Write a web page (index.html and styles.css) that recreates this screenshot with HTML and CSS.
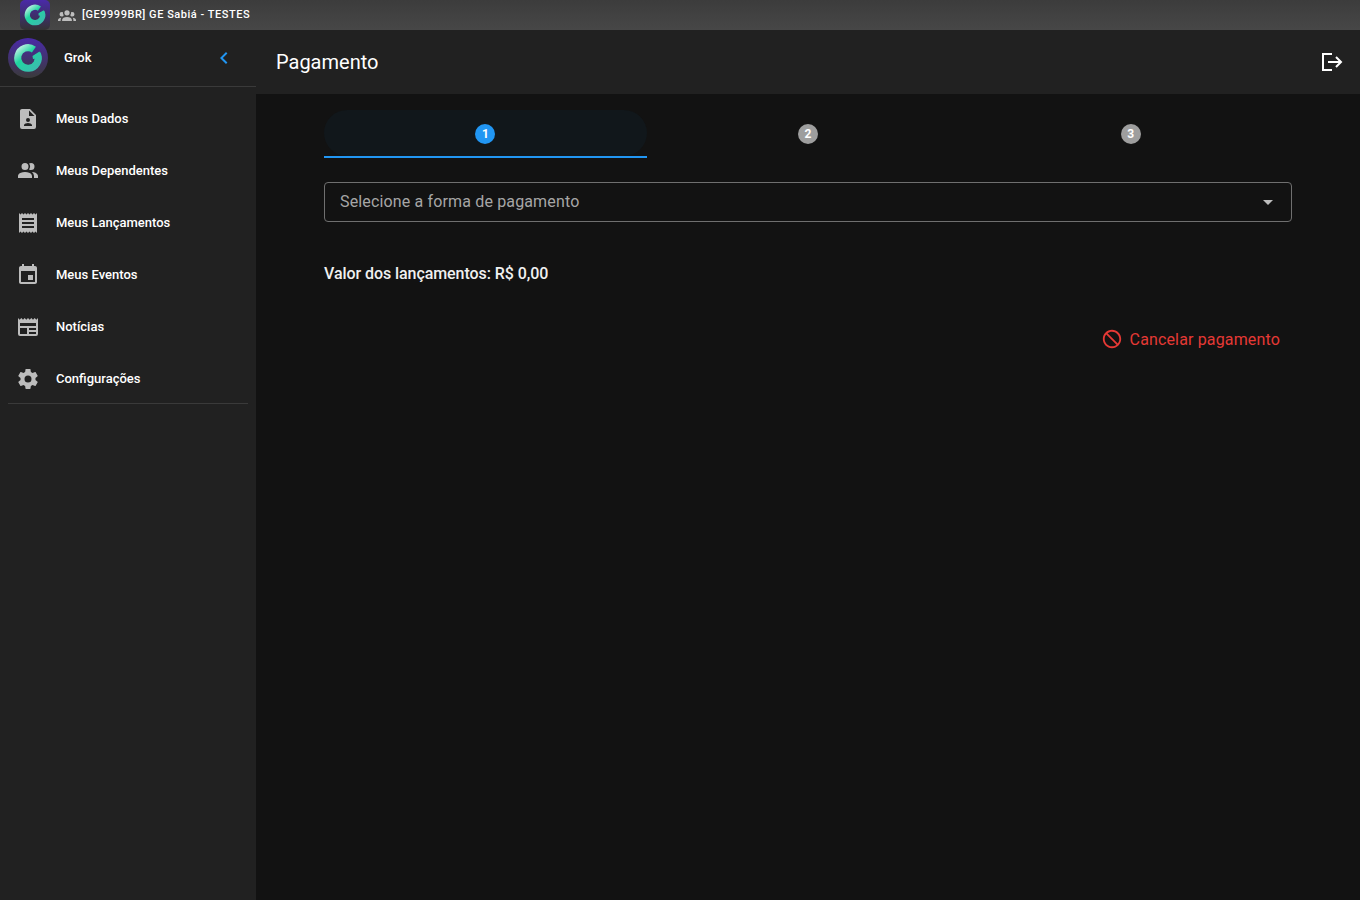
FILE: index.html
```html
<!DOCTYPE html>
<html lang="pt-BR">
<head>
  <meta charset="UTF-8">
  <title>Pagamento</title>
  <link rel="stylesheet" href="styles.css">
</head>
<body>
  <svg class="defs" width="0" height="0" aria-hidden="true">
    <defs>
      <linearGradient id="logo-g" gradientUnits="userSpaceOnUse" x1="10" y1="8" x2="30" y2="32">
        <stop offset="0" stop-color="#d2f2ea"/>
        <stop offset="0.4" stop-color="#1fd6a0"/>
        <stop offset="1" stop-color="#3fb8b0"/>
      </linearGradient>
      <symbol id="logo-mark" viewBox="0 0 40 40">
        <path d="M25.9 11.56A10.3 10.3 0 1 0 29.33 15.65" fill="none" stroke="url(#logo-g)" stroke-width="7"/>
        <path d="M24.5 18L31.5 13.5L33.8 19.5L25 21Z" fill="url(#logo-g)"/>
      </symbol>
    </defs>
  </svg>

  <header class="top-bar">
    <div class="top-logo">
      <svg width="30" height="30"><use href="#logo-mark"/></svg>
    </div>
    <svg class="top-icon" viewBox="0 0 24 24" width="18" height="18"><path d="M12,5.5A3.5,3.5 0 0,1 15.5,9A3.5,3.5 0 0,1 12,12.5A3.5,3.5 0 0,1 8.5,9A3.5,3.5 0 0,1 12,5.5M5,8C5.56,8 6.08,8.15 6.53,8.42C6.38,9.85 6.8,11.27 7.66,12.38C7.16,13.34 6.16,14 5,14A3,3 0 0,1 2,11A3,3 0 0,1 5,8M19,8A3,3 0 0,1 22,11A3,3 0 0,1 19,14C17.84,14 16.84,13.34 16.34,12.38C17.2,11.27 17.62,9.85 17.47,8.42C17.92,8.15 18.44,8 19,8M5.5,18.25C5.5,16.18 8.41,14.5 12,14.5C15.59,14.5 18.5,16.18 18.5,18.25V20H5.5V18.25M0,20V18.5C0,17.11 1.89,15.94 4.45,15.6C3.86,16.28 3.5,17.22 3.5,18.25V20H0M24,20H20.5V18.25C20.5,17.22 20.14,16.28 19.55,15.6C22.11,15.94 24,17.11 24,18.5V20Z"/></svg>
    <span class="top-title">[GE9999BR] GE Sabiá - TESTES</span>
  </header>

  <div class="app">
    <aside class="sidebar">
      <div class="user-row">
        <div class="avatar">
          <svg width="40" height="40"><use href="#logo-mark"/></svg>
        </div>
        <span class="user-name">Grok</span>
        <svg class="collapse" viewBox="0 0 24 24" width="24" height="24"><path d="M15.41,16.58L10.83,12L15.41,7.41L14,6L8,12L14,18L15.41,16.58Z"/></svg>
      </div>
      <nav class="menu">
        <a class="menu-item">
          <svg viewBox="0 0 24 24" width="24" height="24"><path d="M6,2C4.89,2 4,2.89 4,4V20A2,2 0 0,0 6,22H18A2,2 0 0,0 20,20V8L14,2H6M13,3.5L18.5,9H13V3.5M12,11A2,2 0 0,1 14,13A2,2 0 0,1 12,15A2,2 0 0,1 10,13A2,2 0 0,1 12,11M16,19H8V18C8,16.67 10.67,16 12,16C13.33,16 16,16.67 16,18V19Z"/></svg>
          <span>Meus Dados</span>
        </a>
        <a class="menu-item">
          <svg viewBox="0 0 24 24" width="24" height="24"><path d="M16 17V19H2V17S2 13 9 13 16 17 16 17M12.5 7.5A3.5 3.5 0 1 0 9 11A3.5 3.5 0 0 0 12.5 7.5M15.94 13A5.32 5.32 0 0 1 18 17V19H22V17S22 13.37 15.94 13M15 4A3.39 3.39 0 0 0 13.07 4.59A5 5 0 0 1 13.07 10.41A3.39 3.39 0 0 0 15 11A3.5 3.5 0 0 0 15 4Z"/></svg>
          <span>Meus Dependentes</span>
        </a>
        <a class="menu-item">
          <svg viewBox="0 0 24 24" width="24" height="24"><path d="M3,22L4.5,20.5L6,22L7.5,20.5L9,22L10.5,20.5L12,22L13.5,20.5L15,22L16.5,20.5L18,22L19.5,20.5L21,22V2L19.5,3.5L18,2L16.5,3.5L15,2L13.5,3.5L12,2L10.5,3.5L9,2L7.5,3.5L6,2L4.5,3.5L3,2M18,9H6V7H18M18,13H6V11H18M18,17H6V15H18V17Z"/></svg>
          <span>Meus Lançamentos</span>
        </a>
        <a class="menu-item">
          <svg viewBox="0 0 24 24" width="24" height="24"><path d="M17 12h-5v5h5v-5zM16 1v2H8V1H6v2H5c-1.11 0-1.99.9-1.99 2L3 19c0 1.1.89 2 2 2h14c1.1 0 2-.9 2-2V5c0-1.1-.9-2-2-2h-1V1h-2zm3 18H5V8h14v11z"/></svg>
          <span>Meus Eventos</span>
        </a>
        <a class="menu-item">
          <svg viewBox="0 0 24 24" width="24" height="24"><path d="M20,11H4V8H20M20,15H13V13H20M20,19H13V17H20M11,19H4V13H11M20.33,4.67L18.67,3L17,4.67L15.33,3L13.67,4.67L12,3L10.33,4.67L8.67,3L7,4.67L5.33,3L3.67,4.67L2,3V19A2,2 0 0,0 4,21H20A2,2 0 0,0 22,19V3L20.33,4.67Z"/></svg>
          <span>Notícias</span>
        </a>
        <a class="menu-item">
          <svg viewBox="0 0 24 24" width="24" height="24"><path d="M12,15.5A3.5,3.5 0 0,1 8.5,12A3.5,3.5 0 0,1 12,8.5A3.5,3.5 0 0,1 15.5,12A3.5,3.5 0 0,1 12,15.5M19.43,12.97C19.47,12.65 19.5,12.33 19.5,12C19.5,11.67 19.47,11.34 19.43,11L21.54,9.37C21.73,9.22 21.78,8.95 21.66,8.73L19.66,5.27C19.54,5.05 19.27,4.96 19.05,5.05L16.56,6.05C16.04,5.66 15.5,5.32 14.87,5.07L14.5,2.42C14.46,2.18 14.25,2 14,2H10C9.75,2 9.54,2.18 9.5,2.42L9.13,5.07C8.5,5.32 7.96,5.66 7.44,6.05L4.95,5.05C4.73,4.96 4.46,5.05 4.34,5.27L2.34,8.73C2.21,8.95 2.27,9.22 2.46,9.37L4.57,11C4.53,11.34 4.5,11.67 4.5,12C4.5,12.33 4.53,12.65 4.57,12.97L2.46,14.63C2.27,14.78 2.21,15.05 2.34,15.27L4.34,18.73C4.46,18.95 4.73,19.03 4.95,18.95L7.44,17.94C7.96,18.34 8.5,18.68 9.13,18.93L9.5,21.58C9.54,21.82 9.75,22 10,22H14C14.25,22 14.46,21.82 14.5,21.58L14.87,18.93C15.5,18.67 16.04,18.34 16.56,17.94L19.05,18.95C19.27,19.03 19.54,18.95 19.66,18.73L21.66,15.27C21.78,15.05 21.73,14.78 21.54,14.63L19.43,12.97Z"/></svg>
          <span>Configurações</span>
        </a>
      </nav>
      <div class="menu-divider"></div>
    </aside>

    <div class="content">
      <div class="toolbar">
        <h1>Pagamento</h1>
        <svg class="logout" viewBox="0 0 24 24" width="24" height="24"><path d="M12 4H3v16h9M8 12h13M16 7l5 5-5 5" fill="none" stroke="#fff" stroke-width="2"/></svg>
      </div>
      <main class="page">
        <div class="steps">
          <div class="step active"><div class="step-pill"><span class="step-num">1</span></div></div>
          <div class="step"><div class="step-pill"><span class="step-num">2</span></div></div>
          <div class="step"><div class="step-pill"><span class="step-num">3</span></div></div>
        </div>
        <div class="select">
          <span>Selecione a forma de pagamento</span>
          <i class="caret"></i>
        </div>
        <p class="total">Valor dos lançamentos: R$ 0,00</p>
        <div class="actions">
          <button class="cancel">
            <svg viewBox="0 0 24 24" width="22" height="22"><path d="M12 2C17.5 2 22 6.5 22 12S17.5 22 12 22 2 17.5 2 12 6.5 2 12 2M12 4C10.1 4 8.4 4.6 7.1 5.7L18.3 16.9C19.3 15.5 20 13.8 20 12C20 7.6 16.4 4 12 4M16.9 18.3L5.7 7.1C4.6 8.4 4 10.1 4 12C4 16.4 7.6 20 12 20C13.9 20 15.6 19.4 16.9 18.3Z"/></svg>
            Cancelar pagamento
          </button>
        </div>
      </main>
    </div>
  </div>
</body>
</html>
```

FILE: styles.css
```css
html, body {
  margin: 0;
  height: 100%;
  overflow: hidden;
}
body {
  font-family: Roboto, 'Liberation Sans', sans-serif;
  background-color: #121212;
  color: #fff;
}
.defs {
  display: block;
  height: 0;
}

/* barra superior */
.top-bar {
  display: flex;
  align-items: center;
  height: 30px;
  padding-left: 20px;
  background: linear-gradient(#3c3c3c, #474747);
}
.top-logo {
  width: 30px;
  height: 30px;
  border-radius: 5px;
  background: linear-gradient(#4a2aa8, #333);
}
.top-logo svg {
  display: block;
}
.top-icon {
  margin-left: 8px;
  fill: #bdbdbd;
}
.top-title {
  margin: 0 0 2px 6px;
  font-size: 11px;
  font-weight: 500;
  letter-spacing: 0.53px;
  color: #fff;
}

/* menu lateral */
.app {
  display: flex;
  height: 870px;
}
.sidebar {
  width: 256px;
  flex-shrink: 0;
  background-color: #212121;
}
.user-row {
  display: flex;
  align-items: center;
  height: 56px;
  margin-bottom: 1px;
  padding-left: 8px;
  padding-right: 20px;
  border-bottom: 1px solid #3a3a3a;
}
.avatar {
  width: 40px;
  height: 40px;
  border-radius: 50%;
  background: linear-gradient(#4a2aa8, #3a3a3a);
}
.avatar svg {
  display: block;
}
.user-name {
  flex: 1;
  margin: 0 0 2px 16px;
  font-size: 13px;
  font-weight: 500;
}
.collapse {
  fill: #2196f3;
}
.menu {
  padding-top: 4px;
}
.menu-item {
  display: flex;
  align-items: center;
  height: 52px;
  padding-left: 16px;
  font-size: 13px;
  font-weight: 500;
}
.menu-item svg {
  margin: 2px 16px 0 0;
  fill: #bdbdbd;
}
.menu-divider {
  height: 1px;
  margin: -1px 8px 0;
  background-color: #3a3a3a;
}

/* area principal */
.content {
  flex: 1;
  min-width: 0;
}
.toolbar {
  display: flex;
  align-items: center;
  justify-content: space-between;
  height: 64px;
  padding: 0 16px 0 20px;
  background-color: #212121;
}
.toolbar h1 {
  margin: 0;
  font-size: 20px;
  font-weight: 400;
}
.page {
  padding: 16px 68px 0;
}
.steps {
  display: grid;
  grid-template-columns: repeat(3, 1fr);
}
.step {
  box-sizing: border-box;
  height: 48px;
  border-bottom: 2px solid transparent;
}
.step.active {
  border-bottom-color: #2196f3;
}
.step-pill {
  display: flex;
  align-items: center;
  justify-content: center;
  height: 46px;
  border-radius: 24px;
}
.step.active .step-pill {
  background-color: #11171b;
}
.step-num {
  display: flex;
  align-items: center;
  justify-content: center;
  width: 20px;
  height: 20px;
  margin-top: 2px;
  border-radius: 50%;
  background-color: #9e9e9e;
  font-size: 12px;
  font-weight: 700;
}
.step.active .step-num {
  background-color: #2196f3;
}
.select {
  display: flex;
  align-items: center;
  justify-content: space-between;
  height: 40px;
  box-sizing: border-box;
  margin-top: 24px;
  padding: 0 18px 2px 15px;
  border: 1px solid #6f6f6f;
  border-radius: 4px;
  font-size: 16px;
  letter-spacing: 0.15px;
  color: #a6a6a6;
}
.caret {
  width: 0;
  height: 0;
  margin-top: 2px;
  border-left: 5px solid transparent;
  border-right: 5px solid transparent;
  border-top: 5px solid #bdbdbd;
}
.total {
  margin: 42px 0 0;
  font-size: 16px;
  font-weight: 500;
  letter-spacing: -0.07px;
  line-height: 20px;
  color: #f0f0f0;
}
.actions {
  display: flex;
  justify-content: flex-end;
  margin-top: 37px;
}
.cancel {
  display: flex;
  align-items: center;
  gap: 7px;
  height: 36px;
  padding: 0 12px;
  border: none;
  background: none;
  font-family: inherit;
  font-size: 16px;
  letter-spacing: 0.15px;
  color: #e53935;
}
.cancel svg {
  fill: #e53935;
}
```
